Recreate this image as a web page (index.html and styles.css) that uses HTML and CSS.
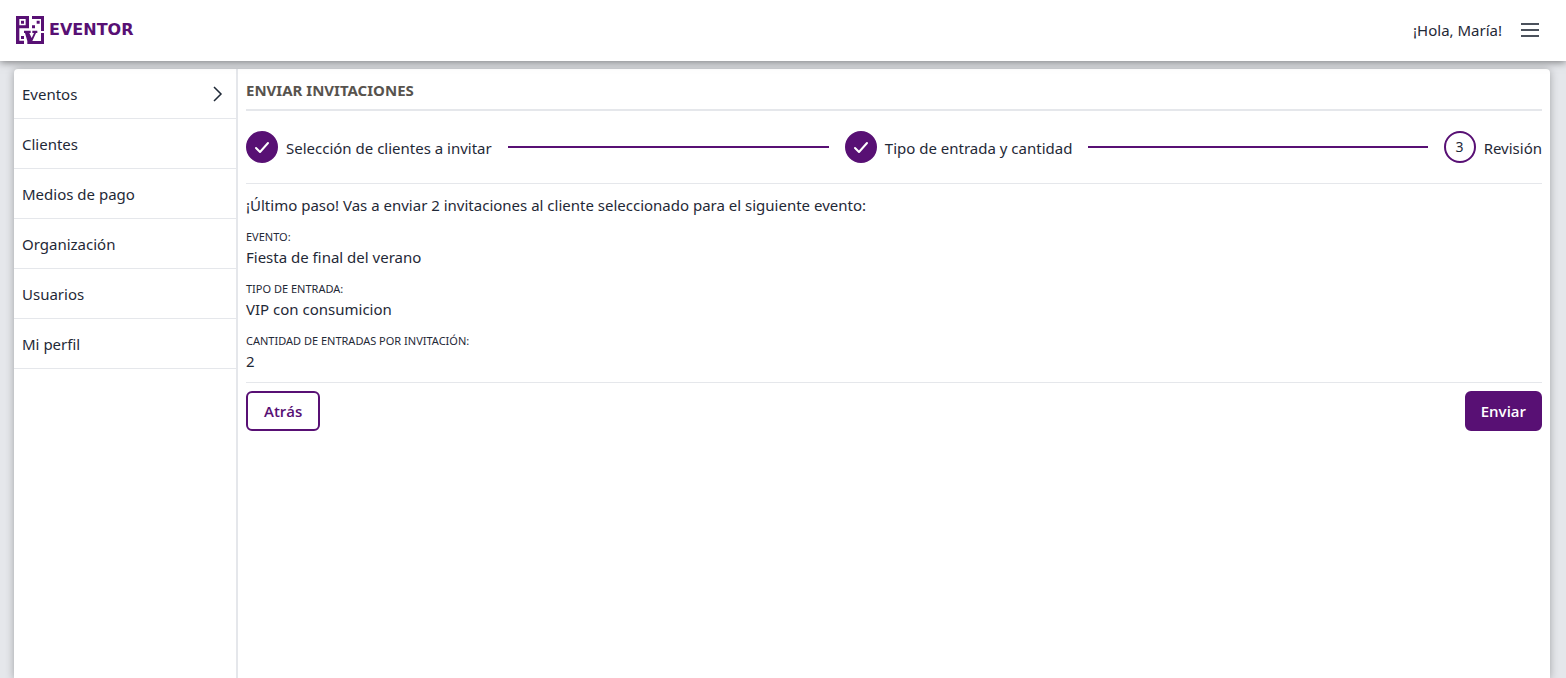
FILE: index.html
```html
<!DOCTYPE html>
<html lang="es">
<head>
<meta charset="utf-8">
<meta name="viewport" content="width=device-width, initial-scale=1">
<title>Eventor</title>
<link rel="stylesheet" href="styles.css">
</head>
<body>
<header class="topbar">
  <a class="brand" href="#">
    <svg class="brand-mark" viewBox="0 0 84 84" aria-hidden="true">
      <path fill-rule="evenodd" d="M0 0H39V37H10V74H24V84H0ZM10 9V28H29V9Z"/>
      <path d="M15 14H24V23H15ZM15 60H24V69H15ZM62 14H71V23H62Z"/>
      <path d="M48 0H84V45H75V9H48ZM48 28H57V37H48Z"/>
      <path d="M24 44H44V51H40L47 66L54 51H49V44H64V51H60L49 75H75V51H84V84H34V75L27 51H24Z"/>
    </svg>
    <span class="brand-name">EVENTOR</span>
  </a>
  <div class="account">
    <span>¡Hola, María!</span>
    <button class="menu-button" type="button" aria-label="Abrir menú">
      <svg viewBox="0 0 24 24" aria-hidden="true"><path d="M3 6H21M3 12H21M3 18H21"/></svg>
    </button>
  </div>
</header>
<div class="page">
  <div class="panel">
    <nav class="sidebar" aria-label="Principal">
      <a class="nav-item" href="#">Eventos
        <svg class="chevron" viewBox="0 0 16 16" aria-hidden="true"><path d="M4 1L11 8L4 15"/></svg>
      </a>
      <a class="nav-item" href="#">Clientes</a>
      <a class="nav-item" href="#">Medios de pago</a>
      <a class="nav-item" href="#">Organización</a>
      <a class="nav-item" href="#">Usuarios</a>
      <a class="nav-item" href="#">Mi perfil</a>
    </nav>
    <main class="content">
      <h1 class="title">ENVIAR INVITACIONES</h1>
      <ol class="steps">
        <li class="step">
          <span class="badge done"><svg viewBox="0 0 16 16" aria-hidden="true"><path d="M2 9L6 13L14 4"/></svg></span>
          <span class="step-label">Selección de clientes a invitar</span>
        </li>
        <li class="step">
          <span class="badge done"><svg viewBox="0 0 16 16" aria-hidden="true"><path d="M2 9L6 13L14 4"/></svg></span>
          <span class="step-label">Tipo de entrada y cantidad</span>
        </li>
        <li class="step" aria-current="step">
          <span class="badge">3</span>
          <span class="step-label">Revisión</span>
        </li>
      </ol>
      <section class="review">
        <p class="intro">¡Último paso! Vas a enviar 2 invitaciones al cliente seleccionado para el siguiente evento:</p>
        <dl class="summary">
          <div class="field"><dt>EVENTO:</dt><dd>Fiesta de final del verano</dd></div>
          <div class="field"><dt>TIPO DE ENTRADA:</dt><dd>VIP con consumicion</dd></div>
          <div class="field"><dt>CANTIDAD DE ENTRADAS POR INVITACIÓN:</dt><dd>2</dd></div>
        </dl>
      </section>
      <div class="actions">
        <button class="button outline" type="button">Atrás</button>
        <button class="button solid" type="button">Enviar</button>
      </div>
    </main>
  </div>
</div>
</body>
</html>
```
FILE: styles.css
```css
:root {
  --purple: #581074;
  --line: #e5e7eb;
  --text: #1f2937;
}

* {
  box-sizing: border-box;
}

body {
  display: flex;
  flex-direction: column;
  min-height: 100vh;
  margin: 0;
  background: #e5e7eb;
  color: var(--text);
  font: 15px/24px "Noto Sans", "Open Sans", sans-serif;
}

.topbar {
  position: relative;
  display: flex;
  align-items: center;
  justify-content: space-between;
  padding: 14px 24px 15px 16px;
  background: #fff;
  box-shadow: 0 1px 8px rgba(0, 0, 0, 0.5);
}

.brand {
  display: flex;
  align-items: center;
  gap: 5px;
  color: #581074;
  text-decoration: none;
}

.brand-mark {
  width: 28px;
  height: 28px;
  fill: currentColor;
}

.brand-name {
  font: bold 16px/24px "DejaVu Sans", sans-serif;
}

.account {
  display: flex;
  align-items: center;
  gap: 16px;
}

.menu-button {
  display: flex;
  padding: 4px 0;
  border: 0;
  background: none;
}

.menu-button svg {
  width: 24px;
  height: 24px;
  fill: none;
  stroke: #111827;
  stroke-width: 1.5;
}

.page {
  display: flex;
  flex: 1;
  padding: 8px 16px 0 14px;
}

.panel {
  display: flex;
  flex: 1;
  border-radius: 4px 4px 0 0;
  background: #fff;
  box-shadow: 0 1px 8px rgba(0, 0, 0, 0.3);
}

.sidebar {
  flex: 0 0 224px;
  border-right: 2px solid var(--line);
}

.nav-item {
  display: flex;
  align-items: center;
  justify-content: space-between;
  height: 50px;
  padding: 0 10px 0 8px;
  border-bottom: 1px solid var(--line);
  color: inherit;
  text-decoration: none;
}

.chevron {
  width: 16px;
  height: 16px;
  fill: none;
  stroke: currentColor;
  stroke-width: 1.5;
}

.content {
  flex: 1;
  min-width: 0;
  padding: 8px;
}

.title {
  margin: 0;
  padding: 1px 0 7px;
  border-bottom: 2px solid var(--line);
  color: #57534e;
  font-size: 15px;
  line-height: 24px;
  font-weight: 700;
}

.steps {
  display: flex;
  gap: 16px;
  margin: 0;
  padding: 20px 0;
  border-bottom: 1px solid var(--line);
  list-style: none;
}

.step {
  display: flex;
  flex: 1;
  align-items: center;
  gap: 8px;
}

.step:last-child {
  flex: none;
}

.step:not(:last-child)::after {
  flex: 1;
  height: 2px;
  margin-left: 8px;
  background: var(--purple);
  content: "";
}

.badge {
  display: grid;
  place-items: center;
  width: 32px;
  height: 32px;
  border: 2px solid var(--purple);
  border-radius: 50%;
  font-size: 14px;
}

.badge.done {
  background: var(--purple);
}

.badge svg {
  width: 16px;
  height: 16px;
  fill: none;
  stroke: #fff;
  stroke-width: 2;
  stroke-linecap: round;
  stroke-linejoin: round;
}

.step-label {
  padding-top: 2px;
}

.review {
  padding: 9px 0 9px;
  border-bottom: 1px solid var(--line);
}

.intro {
  margin: 0 0 12px;
}

.summary {
  display: grid;
  gap: 12px;
  margin: 0;
}

.field dt {
  font-size: 11px;
  line-height: 16px;
}

.field dd {
  margin: 0;
}

.actions {
  display: flex;
  justify-content: space-between;
  padding-top: 8px;
}

.button {
  height: 40px;
  padding: 0 16px;
  border: 2px solid var(--purple);
  border-radius: 6px;
  font: 600 15px/24px "Open Sans", "Noto Sans", sans-serif;
}

.outline {
  background: #fff;
  color: var(--purple);
}

.solid {
  padding: 0 14px;
  background: var(--purple);
  color: #fff;
}
```
